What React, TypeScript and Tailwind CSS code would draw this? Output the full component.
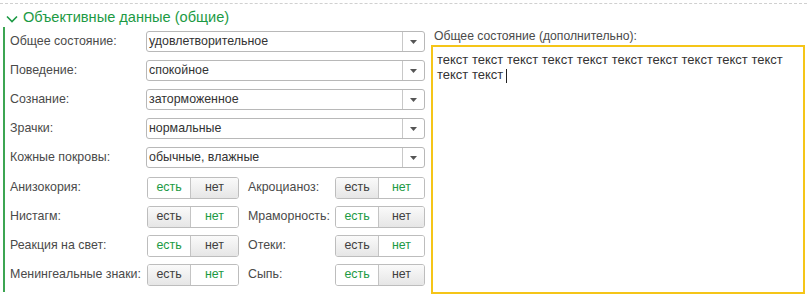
import React from "react";

const selects = [
  ["Общее состояние:", "удовлетворительное"],
  ["Поведение:", "спокойное"],
  ["Сознание:", "заторможенное"],
  ["Зрачки:", "нормальные"],
  ["Кожные покровы:", "обычные, влажные"],
];

const toggles: [string, boolean, string, boolean][] = [
  ["Анизокория:", true, "Акроцианоз:", false],
  ["Нистагм:", false, "Мраморность:", true],
  ["Реакция на свет:", true, "Отеки:", false],
  ["Менингеальные знаки:", false, "Сыпь:", true],
];

function Toggle({ yes, w1, w2 }: { yes: boolean; w1: number; w2: number }) {
  const on = "bg-white text-[#1c9a44]";
  const off = "bg-gradient-to-b from-[#fafafa] to-[#e6e6e6] text-[#404040]";
  return (
    <div className="flex h-[22px] rounded-[3px] border border-[#bdbdbd] overflow-hidden text-[12.4px] leading-none">
      <div
        className={`flex items-center justify-center border-r border-[#c4c4c4] ${yes ? on : off}`}
        style={{ width: w1 }}
      >
        есть
      </div>
      <div className={`flex items-center justify-center ${yes ? off : on}`} style={{ width: w2 }}>
        нет
      </div>
    </div>
  );
}

export default function App() {
  return (
    <div
      className="w-[812px] h-[305px] bg-white relative overflow-hidden text-[12.4px] text-[#4a4a4a]"
      style={{ fontFamily: '"Liberation Sans", Arial, sans-serif' }}
    >
      <div className="ml-[0px] mr-[5px] mt-[3px] border-t border-dashed border-[#d0d0d0]" />
      <div className="flex items-center h-[24px] mt-[2px] pl-[6px] text-[#1c9a44] text-[14.6px]">
        <svg width="12" height="8" viewBox="0 0 12 8" className="mr-[5px] mt-[1px]">
          <path d="M1 1.5 L6 6.5 L11 1.5" fill="none" stroke="#1c9a44" strokeWidth="1.6" />
        </svg>
        <span>Объективные данные (общие)</span>
      </div>
      <div className="flex mt-[-3px]">
        <div className="ml-[3px] w-[2px] bg-[#3ca552] h-[265px]" />
        <div className="w-[421px] flex flex-col pl-[5px]">
          {selects.map(([l, v]) => (
            <div key={l} className="flex items-center h-[29px]">
              <div className="w-[136px]">{l}</div>
              <div className="flex h-[21px] w-[279px] rounded-[3px] border border-[#b8b8b8] bg-white text-[#333]">
                <div className="flex-1 flex items-center pl-[2px]">{v}</div>
                <div className="w-[22px] border-l border-[#c8c8c8] flex items-center justify-center">
                  <svg width="7" height="4" viewBox="0 0 7 4">
                    <path d="M0 0 L7 0 L3.5 4 Z" fill="#555" />
                  </svg>
                </div>
              </div>
            </div>
          ))}
          <div className="flex flex-col mt-[1px]">
            {toggles.map(([l1, y1, l2, y2]) => (
              <div key={l1} className="flex items-center h-[29px]">
                <div className="w-[137px] whitespace-nowrap">{l1}</div>
                <Toggle yes={y1} w1={43} w2={47} />
                <div className="w-[96px] pl-[9px] whitespace-nowrap">{l2}</div>
                <Toggle yes={y2} w1={43} w2={45} />
              </div>
            ))}
          </div>
        </div>
        <div className="flex flex-col ml-[5px] mt-[1px]">
          <div className="h-[17px] pl-[3px] leading-[17px] text-[12.2px]">Общее состояние (дополнительно):</div>
          <div className="w-[374px] h-[249px] border-2 border-[#f5c518] bg-white px-[4px] pt-[5px] text-[13px] leading-[15px] text-[#333]">
            текст текст текст текст текст текст текст текст текст текст текст текст
            <span className="inline-block w-[1px] h-[14px] bg-[#222] align-middle ml-[3px]" />
          </div>
        </div>
      </div>
    </div>
  );
}
